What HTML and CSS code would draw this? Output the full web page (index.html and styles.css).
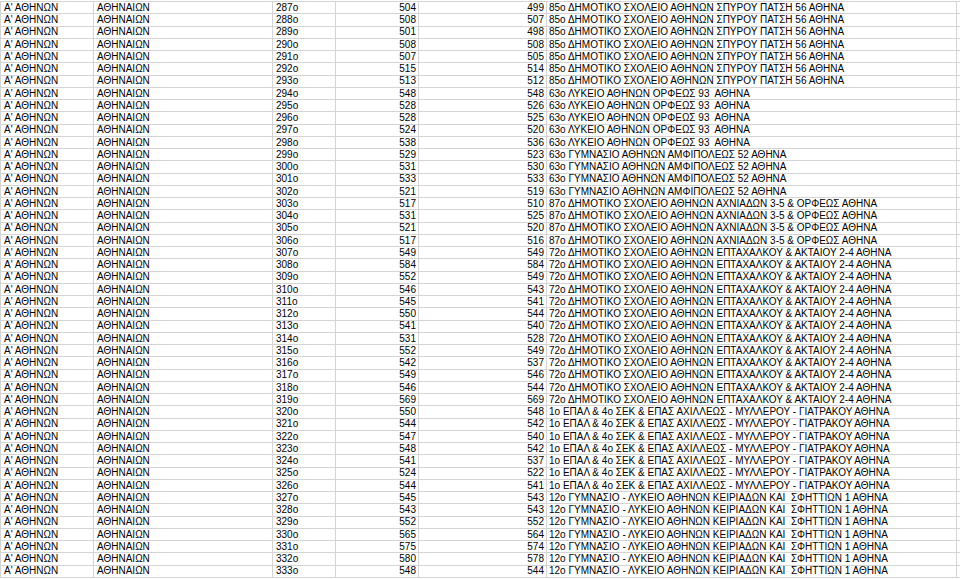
FILE: index.html
```html
<!DOCTYPE html>
<html lang="el">
<head>
<meta charset="utf-8">
<title>Sheet</title>
<link rel="stylesheet" href="styles.css">
</head>
<body>
<div class="sheet">
<div class="row"><div class="c">Α' ΑΘΗΝΩΝ</div><div class="c">ΑΘΗΝΑΙΩΝ</div><div class="c">287ο</div><div class="c n">504</div><div class="c n">499</div><div class="c t">85ο ΔΗΜΟΤΙΚΟ ΣΧΟΛΕΙΟ ΑΘΗΝΩΝ ΣΠΥΡΟΥ ΠΑΤΣΗ 56 ΑΘΗΝΑ</div></div>
<div class="row"><div class="c">Α' ΑΘΗΝΩΝ</div><div class="c">ΑΘΗΝΑΙΩΝ</div><div class="c">288ο</div><div class="c n">508</div><div class="c n">507</div><div class="c t">85ο ΔΗΜΟΤΙΚΟ ΣΧΟΛΕΙΟ ΑΘΗΝΩΝ ΣΠΥΡΟΥ ΠΑΤΣΗ 56 ΑΘΗΝΑ</div></div>
<div class="row"><div class="c">Α' ΑΘΗΝΩΝ</div><div class="c">ΑΘΗΝΑΙΩΝ</div><div class="c">289ο</div><div class="c n">501</div><div class="c n">498</div><div class="c t">85ο ΔΗΜΟΤΙΚΟ ΣΧΟΛΕΙΟ ΑΘΗΝΩΝ ΣΠΥΡΟΥ ΠΑΤΣΗ 56 ΑΘΗΝΑ</div></div>
<div class="row"><div class="c">Α' ΑΘΗΝΩΝ</div><div class="c">ΑΘΗΝΑΙΩΝ</div><div class="c">290ο</div><div class="c n">508</div><div class="c n">508</div><div class="c t">85ο ΔΗΜΟΤΙΚΟ ΣΧΟΛΕΙΟ ΑΘΗΝΩΝ ΣΠΥΡΟΥ ΠΑΤΣΗ 56 ΑΘΗΝΑ</div></div>
<div class="row"><div class="c">Α' ΑΘΗΝΩΝ</div><div class="c">ΑΘΗΝΑΙΩΝ</div><div class="c">291ο</div><div class="c n">507</div><div class="c n">505</div><div class="c t">85ο ΔΗΜΟΤΙΚΟ ΣΧΟΛΕΙΟ ΑΘΗΝΩΝ ΣΠΥΡΟΥ ΠΑΤΣΗ 56 ΑΘΗΝΑ</div></div>
<div class="row"><div class="c">Α' ΑΘΗΝΩΝ</div><div class="c">ΑΘΗΝΑΙΩΝ</div><div class="c">292ο</div><div class="c n">515</div><div class="c n">514</div><div class="c t">85ο ΔΗΜΟΤΙΚΟ ΣΧΟΛΕΙΟ ΑΘΗΝΩΝ ΣΠΥΡΟΥ ΠΑΤΣΗ 56 ΑΘΗΝΑ</div></div>
<div class="row"><div class="c">Α' ΑΘΗΝΩΝ</div><div class="c">ΑΘΗΝΑΙΩΝ</div><div class="c">293ο</div><div class="c n">513</div><div class="c n">512</div><div class="c t">85ο ΔΗΜΟΤΙΚΟ ΣΧΟΛΕΙΟ ΑΘΗΝΩΝ ΣΠΥΡΟΥ ΠΑΤΣΗ 56 ΑΘΗΝΑ</div></div>
<div class="row"><div class="c">Α' ΑΘΗΝΩΝ</div><div class="c">ΑΘΗΝΑΙΩΝ</div><div class="c">294ο</div><div class="c n">548</div><div class="c n">548</div><div class="c t">63ο ΛΥΚΕΙΟ ΑΘΗΝΩΝ ΟΡΦΕΩΣ 93  ΑΘΗΝΑ</div></div>
<div class="row"><div class="c">Α' ΑΘΗΝΩΝ</div><div class="c">ΑΘΗΝΑΙΩΝ</div><div class="c">295ο</div><div class="c n">528</div><div class="c n">526</div><div class="c t">63ο ΛΥΚΕΙΟ ΑΘΗΝΩΝ ΟΡΦΕΩΣ 93  ΑΘΗΝΑ</div></div>
<div class="row"><div class="c">Α' ΑΘΗΝΩΝ</div><div class="c">ΑΘΗΝΑΙΩΝ</div><div class="c">296ο</div><div class="c n">528</div><div class="c n">525</div><div class="c t">63ο ΛΥΚΕΙΟ ΑΘΗΝΩΝ ΟΡΦΕΩΣ 93  ΑΘΗΝΑ</div></div>
<div class="row"><div class="c">Α' ΑΘΗΝΩΝ</div><div class="c">ΑΘΗΝΑΙΩΝ</div><div class="c">297ο</div><div class="c n">524</div><div class="c n">520</div><div class="c t">63ο ΛΥΚΕΙΟ ΑΘΗΝΩΝ ΟΡΦΕΩΣ 93  ΑΘΗΝΑ</div></div>
<div class="row"><div class="c">Α' ΑΘΗΝΩΝ</div><div class="c">ΑΘΗΝΑΙΩΝ</div><div class="c">298ο</div><div class="c n">538</div><div class="c n">536</div><div class="c t">63ο ΛΥΚΕΙΟ ΑΘΗΝΩΝ ΟΡΦΕΩΣ 93  ΑΘΗΝΑ</div></div>
<div class="row"><div class="c">Α' ΑΘΗΝΩΝ</div><div class="c">ΑΘΗΝΑΙΩΝ</div><div class="c">299ο</div><div class="c n">529</div><div class="c n">523</div><div class="c t">63ο ΓΥΜΝΑΣΙΟ ΑΘΗΝΩΝ ΑΜΦΙΠΟΛΕΩΣ 52 ΑΘΗΝΑ</div></div>
<div class="row"><div class="c">Α' ΑΘΗΝΩΝ</div><div class="c">ΑΘΗΝΑΙΩΝ</div><div class="c">300ο</div><div class="c n">531</div><div class="c n">530</div><div class="c t">63ο ΓΥΜΝΑΣΙΟ ΑΘΗΝΩΝ ΑΜΦΙΠΟΛΕΩΣ 52 ΑΘΗΝΑ</div></div>
<div class="row"><div class="c">Α' ΑΘΗΝΩΝ</div><div class="c">ΑΘΗΝΑΙΩΝ</div><div class="c">301ο</div><div class="c n">533</div><div class="c n">533</div><div class="c t">63ο ΓΥΜΝΑΣΙΟ ΑΘΗΝΩΝ ΑΜΦΙΠΟΛΕΩΣ 52 ΑΘΗΝΑ</div></div>
<div class="row"><div class="c">Α' ΑΘΗΝΩΝ</div><div class="c">ΑΘΗΝΑΙΩΝ</div><div class="c">302ο</div><div class="c n">521</div><div class="c n">519</div><div class="c t">63ο ΓΥΜΝΑΣΙΟ ΑΘΗΝΩΝ ΑΜΦΙΠΟΛΕΩΣ 52 ΑΘΗΝΑ</div></div>
<div class="row"><div class="c">Α' ΑΘΗΝΩΝ</div><div class="c">ΑΘΗΝΑΙΩΝ</div><div class="c">303ο</div><div class="c n">517</div><div class="c n">510</div><div class="c t">87ο ΔΗΜΟΤΙΚΟ ΣΧΟΛΕΙΟ ΑΘΗΝΩΝ ΑΧΝΙΑΔΩΝ 3-5 &amp; ΟΡΦΕΩΣ ΑΘΗΝΑ</div></div>
<div class="row"><div class="c">Α' ΑΘΗΝΩΝ</div><div class="c">ΑΘΗΝΑΙΩΝ</div><div class="c">304ο</div><div class="c n">531</div><div class="c n">525</div><div class="c t">87ο ΔΗΜΟΤΙΚΟ ΣΧΟΛΕΙΟ ΑΘΗΝΩΝ ΑΧΝΙΑΔΩΝ 3-5 &amp; ΟΡΦΕΩΣ ΑΘΗΝΑ</div></div>
<div class="row"><div class="c">Α' ΑΘΗΝΩΝ</div><div class="c">ΑΘΗΝΑΙΩΝ</div><div class="c">305ο</div><div class="c n">521</div><div class="c n">520</div><div class="c t">87ο ΔΗΜΟΤΙΚΟ ΣΧΟΛΕΙΟ ΑΘΗΝΩΝ ΑΧΝΙΑΔΩΝ 3-5 &amp; ΟΡΦΕΩΣ ΑΘΗΝΑ</div></div>
<div class="row"><div class="c">Α' ΑΘΗΝΩΝ</div><div class="c">ΑΘΗΝΑΙΩΝ</div><div class="c">306ο</div><div class="c n">517</div><div class="c n">516</div><div class="c t">87ο ΔΗΜΟΤΙΚΟ ΣΧΟΛΕΙΟ ΑΘΗΝΩΝ ΑΧΝΙΑΔΩΝ 3-5 &amp; ΟΡΦΕΩΣ ΑΘΗΝΑ</div></div>
<div class="row"><div class="c">Α' ΑΘΗΝΩΝ</div><div class="c">ΑΘΗΝΑΙΩΝ</div><div class="c">307ο</div><div class="c n">549</div><div class="c n">549</div><div class="c t">72ο ΔΗΜΟΤΙΚΟ ΣΧΟΛΕΙΟ ΑΘΗΝΩΝ ΕΠΤΑΧΑΛΚΟΥ &amp; ΑΚΤΑΙΟΥ 2-4 ΑΘΗΝΑ</div></div>
<div class="row"><div class="c">Α' ΑΘΗΝΩΝ</div><div class="c">ΑΘΗΝΑΙΩΝ</div><div class="c">308ο</div><div class="c n">584</div><div class="c n">584</div><div class="c t">72ο ΔΗΜΟΤΙΚΟ ΣΧΟΛΕΙΟ ΑΘΗΝΩΝ ΕΠΤΑΧΑΛΚΟΥ &amp; ΑΚΤΑΙΟΥ 2-4 ΑΘΗΝΑ</div></div>
<div class="row"><div class="c">Α' ΑΘΗΝΩΝ</div><div class="c">ΑΘΗΝΑΙΩΝ</div><div class="c">309ο</div><div class="c n">552</div><div class="c n">549</div><div class="c t">72ο ΔΗΜΟΤΙΚΟ ΣΧΟΛΕΙΟ ΑΘΗΝΩΝ ΕΠΤΑΧΑΛΚΟΥ &amp; ΑΚΤΑΙΟΥ 2-4 ΑΘΗΝΑ</div></div>
<div class="row"><div class="c">Α' ΑΘΗΝΩΝ</div><div class="c">ΑΘΗΝΑΙΩΝ</div><div class="c">310ο</div><div class="c n">546</div><div class="c n">543</div><div class="c t">72ο ΔΗΜΟΤΙΚΟ ΣΧΟΛΕΙΟ ΑΘΗΝΩΝ ΕΠΤΑΧΑΛΚΟΥ &amp; ΑΚΤΑΙΟΥ 2-4 ΑΘΗΝΑ</div></div>
<div class="row"><div class="c">Α' ΑΘΗΝΩΝ</div><div class="c">ΑΘΗΝΑΙΩΝ</div><div class="c">311ο</div><div class="c n">545</div><div class="c n">541</div><div class="c t">72ο ΔΗΜΟΤΙΚΟ ΣΧΟΛΕΙΟ ΑΘΗΝΩΝ ΕΠΤΑΧΑΛΚΟΥ &amp; ΑΚΤΑΙΟΥ 2-4 ΑΘΗΝΑ</div></div>
<div class="row"><div class="c">Α' ΑΘΗΝΩΝ</div><div class="c">ΑΘΗΝΑΙΩΝ</div><div class="c">312ο</div><div class="c n">550</div><div class="c n">544</div><div class="c t">72ο ΔΗΜΟΤΙΚΟ ΣΧΟΛΕΙΟ ΑΘΗΝΩΝ ΕΠΤΑΧΑΛΚΟΥ &amp; ΑΚΤΑΙΟΥ 2-4 ΑΘΗΝΑ</div></div>
<div class="row"><div class="c">Α' ΑΘΗΝΩΝ</div><div class="c">ΑΘΗΝΑΙΩΝ</div><div class="c">313ο</div><div class="c n">541</div><div class="c n">540</div><div class="c t">72ο ΔΗΜΟΤΙΚΟ ΣΧΟΛΕΙΟ ΑΘΗΝΩΝ ΕΠΤΑΧΑΛΚΟΥ &amp; ΑΚΤΑΙΟΥ 2-4 ΑΘΗΝΑ</div></div>
<div class="row"><div class="c">Α' ΑΘΗΝΩΝ</div><div class="c">ΑΘΗΝΑΙΩΝ</div><div class="c">314ο</div><div class="c n">531</div><div class="c n">528</div><div class="c t">72ο ΔΗΜΟΤΙΚΟ ΣΧΟΛΕΙΟ ΑΘΗΝΩΝ ΕΠΤΑΧΑΛΚΟΥ &amp; ΑΚΤΑΙΟΥ 2-4 ΑΘΗΝΑ</div></div>
<div class="row"><div class="c">Α' ΑΘΗΝΩΝ</div><div class="c">ΑΘΗΝΑΙΩΝ</div><div class="c">315ο</div><div class="c n">552</div><div class="c n">549</div><div class="c t">72ο ΔΗΜΟΤΙΚΟ ΣΧΟΛΕΙΟ ΑΘΗΝΩΝ ΕΠΤΑΧΑΛΚΟΥ &amp; ΑΚΤΑΙΟΥ 2-4 ΑΘΗΝΑ</div></div>
<div class="row"><div class="c">Α' ΑΘΗΝΩΝ</div><div class="c">ΑΘΗΝΑΙΩΝ</div><div class="c">316ο</div><div class="c n">542</div><div class="c n">537</div><div class="c t">72ο ΔΗΜΟΤΙΚΟ ΣΧΟΛΕΙΟ ΑΘΗΝΩΝ ΕΠΤΑΧΑΛΚΟΥ &amp; ΑΚΤΑΙΟΥ 2-4 ΑΘΗΝΑ</div></div>
<div class="row"><div class="c">Α' ΑΘΗΝΩΝ</div><div class="c">ΑΘΗΝΑΙΩΝ</div><div class="c">317ο</div><div class="c n">549</div><div class="c n">546</div><div class="c t">72ο ΔΗΜΟΤΙΚΟ ΣΧΟΛΕΙΟ ΑΘΗΝΩΝ ΕΠΤΑΧΑΛΚΟΥ &amp; ΑΚΤΑΙΟΥ 2-4 ΑΘΗΝΑ</div></div>
<div class="row"><div class="c">Α' ΑΘΗΝΩΝ</div><div class="c">ΑΘΗΝΑΙΩΝ</div><div class="c">318ο</div><div class="c n">546</div><div class="c n">544</div><div class="c t">72ο ΔΗΜΟΤΙΚΟ ΣΧΟΛΕΙΟ ΑΘΗΝΩΝ ΕΠΤΑΧΑΛΚΟΥ &amp; ΑΚΤΑΙΟΥ 2-4 ΑΘΗΝΑ</div></div>
<div class="row"><div class="c">Α' ΑΘΗΝΩΝ</div><div class="c">ΑΘΗΝΑΙΩΝ</div><div class="c">319ο</div><div class="c n">569</div><div class="c n">569</div><div class="c t">72ο ΔΗΜΟΤΙΚΟ ΣΧΟΛΕΙΟ ΑΘΗΝΩΝ ΕΠΤΑΧΑΛΚΟΥ &amp; ΑΚΤΑΙΟΥ 2-4 ΑΘΗΝΑ</div></div>
<div class="row"><div class="c">Α' ΑΘΗΝΩΝ</div><div class="c">ΑΘΗΝΑΙΩΝ</div><div class="c">320ο</div><div class="c n">550</div><div class="c n">548</div><div class="c t">1ο ΕΠΑΛ &amp; 4ο ΣΕΚ &amp; ΕΠΑΣ ΑΧΙΛΛΕΩΣ - ΜΥΛΛΕΡΟΥ - ΓΙΑΤΡΑΚΟΥ ΑΘΗΝΑ</div></div>
<div class="row"><div class="c">Α' ΑΘΗΝΩΝ</div><div class="c">ΑΘΗΝΑΙΩΝ</div><div class="c">321ο</div><div class="c n">544</div><div class="c n">542</div><div class="c t">1ο ΕΠΑΛ &amp; 4ο ΣΕΚ &amp; ΕΠΑΣ ΑΧΙΛΛΕΩΣ - ΜΥΛΛΕΡΟΥ - ΓΙΑΤΡΑΚΟΥ ΑΘΗΝΑ</div></div>
<div class="row"><div class="c">Α' ΑΘΗΝΩΝ</div><div class="c">ΑΘΗΝΑΙΩΝ</div><div class="c">322ο</div><div class="c n">547</div><div class="c n">540</div><div class="c t">1ο ΕΠΑΛ &amp; 4ο ΣΕΚ &amp; ΕΠΑΣ ΑΧΙΛΛΕΩΣ - ΜΥΛΛΕΡΟΥ - ΓΙΑΤΡΑΚΟΥ ΑΘΗΝΑ</div></div>
<div class="row"><div class="c">Α' ΑΘΗΝΩΝ</div><div class="c">ΑΘΗΝΑΙΩΝ</div><div class="c">323ο</div><div class="c n">548</div><div class="c n">542</div><div class="c t">1ο ΕΠΑΛ &amp; 4ο ΣΕΚ &amp; ΕΠΑΣ ΑΧΙΛΛΕΩΣ - ΜΥΛΛΕΡΟΥ - ΓΙΑΤΡΑΚΟΥ ΑΘΗΝΑ</div></div>
<div class="row"><div class="c">Α' ΑΘΗΝΩΝ</div><div class="c">ΑΘΗΝΑΙΩΝ</div><div class="c">324ο</div><div class="c n">541</div><div class="c n">537</div><div class="c t">1ο ΕΠΑΛ &amp; 4ο ΣΕΚ &amp; ΕΠΑΣ ΑΧΙΛΛΕΩΣ - ΜΥΛΛΕΡΟΥ - ΓΙΑΤΡΑΚΟΥ ΑΘΗΝΑ</div></div>
<div class="row"><div class="c">Α' ΑΘΗΝΩΝ</div><div class="c">ΑΘΗΝΑΙΩΝ</div><div class="c">325ο</div><div class="c n">524</div><div class="c n">522</div><div class="c t">1ο ΕΠΑΛ &amp; 4ο ΣΕΚ &amp; ΕΠΑΣ ΑΧΙΛΛΕΩΣ - ΜΥΛΛΕΡΟΥ - ΓΙΑΤΡΑΚΟΥ ΑΘΗΝΑ</div></div>
<div class="row"><div class="c">Α' ΑΘΗΝΩΝ</div><div class="c">ΑΘΗΝΑΙΩΝ</div><div class="c">326ο</div><div class="c n">544</div><div class="c n">541</div><div class="c t">1ο ΕΠΑΛ &amp; 4ο ΣΕΚ &amp; ΕΠΑΣ ΑΧΙΛΛΕΩΣ - ΜΥΛΛΕΡΟΥ - ΓΙΑΤΡΑΚΟΥ ΑΘΗΝΑ</div></div>
<div class="row"><div class="c">Α' ΑΘΗΝΩΝ</div><div class="c">ΑΘΗΝΑΙΩΝ</div><div class="c">327ο</div><div class="c n">545</div><div class="c n">543</div><div class="c t">12ο ΓΥΜΝΑΣΙΟ - ΛΥΚΕΙΟ ΑΘΗΝΩΝ ΚΕΙΡΙΑΔΩΝ ΚΑΙ  ΣΦΗΤΤΙΩΝ 1 ΑΘΗΝΑ</div></div>
<div class="row"><div class="c">Α' ΑΘΗΝΩΝ</div><div class="c">ΑΘΗΝΑΙΩΝ</div><div class="c">328ο</div><div class="c n">543</div><div class="c n">543</div><div class="c t">12ο ΓΥΜΝΑΣΙΟ - ΛΥΚΕΙΟ ΑΘΗΝΩΝ ΚΕΙΡΙΑΔΩΝ ΚΑΙ  ΣΦΗΤΤΙΩΝ 1 ΑΘΗΝΑ</div></div>
<div class="row"><div class="c">Α' ΑΘΗΝΩΝ</div><div class="c">ΑΘΗΝΑΙΩΝ</div><div class="c">329ο</div><div class="c n">552</div><div class="c n">552</div><div class="c t">12ο ΓΥΜΝΑΣΙΟ - ΛΥΚΕΙΟ ΑΘΗΝΩΝ ΚΕΙΡΙΑΔΩΝ ΚΑΙ  ΣΦΗΤΤΙΩΝ 1 ΑΘΗΝΑ</div></div>
<div class="row"><div class="c">Α' ΑΘΗΝΩΝ</div><div class="c">ΑΘΗΝΑΙΩΝ</div><div class="c">330ο</div><div class="c n">565</div><div class="c n">564</div><div class="c t">12ο ΓΥΜΝΑΣΙΟ - ΛΥΚΕΙΟ ΑΘΗΝΩΝ ΚΕΙΡΙΑΔΩΝ ΚΑΙ  ΣΦΗΤΤΙΩΝ 1 ΑΘΗΝΑ</div></div>
<div class="row"><div class="c">Α' ΑΘΗΝΩΝ</div><div class="c">ΑΘΗΝΑΙΩΝ</div><div class="c">331ο</div><div class="c n">575</div><div class="c n">574</div><div class="c t">12ο ΓΥΜΝΑΣΙΟ - ΛΥΚΕΙΟ ΑΘΗΝΩΝ ΚΕΙΡΙΑΔΩΝ ΚΑΙ  ΣΦΗΤΤΙΩΝ 1 ΑΘΗΝΑ</div></div>
<div class="row"><div class="c">Α' ΑΘΗΝΩΝ</div><div class="c">ΑΘΗΝΑΙΩΝ</div><div class="c">332ο</div><div class="c n">580</div><div class="c n">578</div><div class="c t">12ο ΓΥΜΝΑΣΙΟ - ΛΥΚΕΙΟ ΑΘΗΝΩΝ ΚΕΙΡΙΑΔΩΝ ΚΑΙ  ΣΦΗΤΤΙΩΝ 1 ΑΘΗΝΑ</div></div>
<div class="row"><div class="c">Α' ΑΘΗΝΩΝ</div><div class="c">ΑΘΗΝΑΙΩΝ</div><div class="c">333ο</div><div class="c n">548</div><div class="c n">544</div><div class="c t">12ο ΓΥΜΝΑΣΙΟ - ΛΥΚΕΙΟ ΑΘΗΝΩΝ ΚΕΙΡΙΑΔΩΝ ΚΑΙ  ΣΦΗΤΤΙΩΝ 1 ΑΘΗΝΑ</div></div>
</div>
</body>
</html>
```

FILE: styles.css
```css
html, body {
  margin: 0;
  padding: 0;
  background: #ffffff;
}
body {
  font-family: "Liberation Sans", Arial, sans-serif;
  font-size: 10px;
  color: #000000;
  overflow: hidden;
}
.sheet {
  padding-top: 1px;
}
.row {
  display: grid;
  grid-template-columns: 94px 179px 63px 83px 128px 410px;
  height: 12.255px;
  box-sizing: border-box;
  border-bottom: 1px solid #d4d4d4;
}
.row:first-child {
  border-top: 1px solid #d4d4d4;
  height: 13.255px;
}
.c {
  display: flex;
  align-items: flex-end;
  border-right: 1px solid #d4d4d4;
  padding: 0 2px 0.5px 3px;
  line-height: 10px;
  white-space: pre;
  overflow: hidden;
  min-width: 0;
}
.c:first-child {
  border-left: 1px solid #d4d4d4;
}
.n {
  justify-content: flex-end;
}
.t {
  padding-left: 2px;
}
```
